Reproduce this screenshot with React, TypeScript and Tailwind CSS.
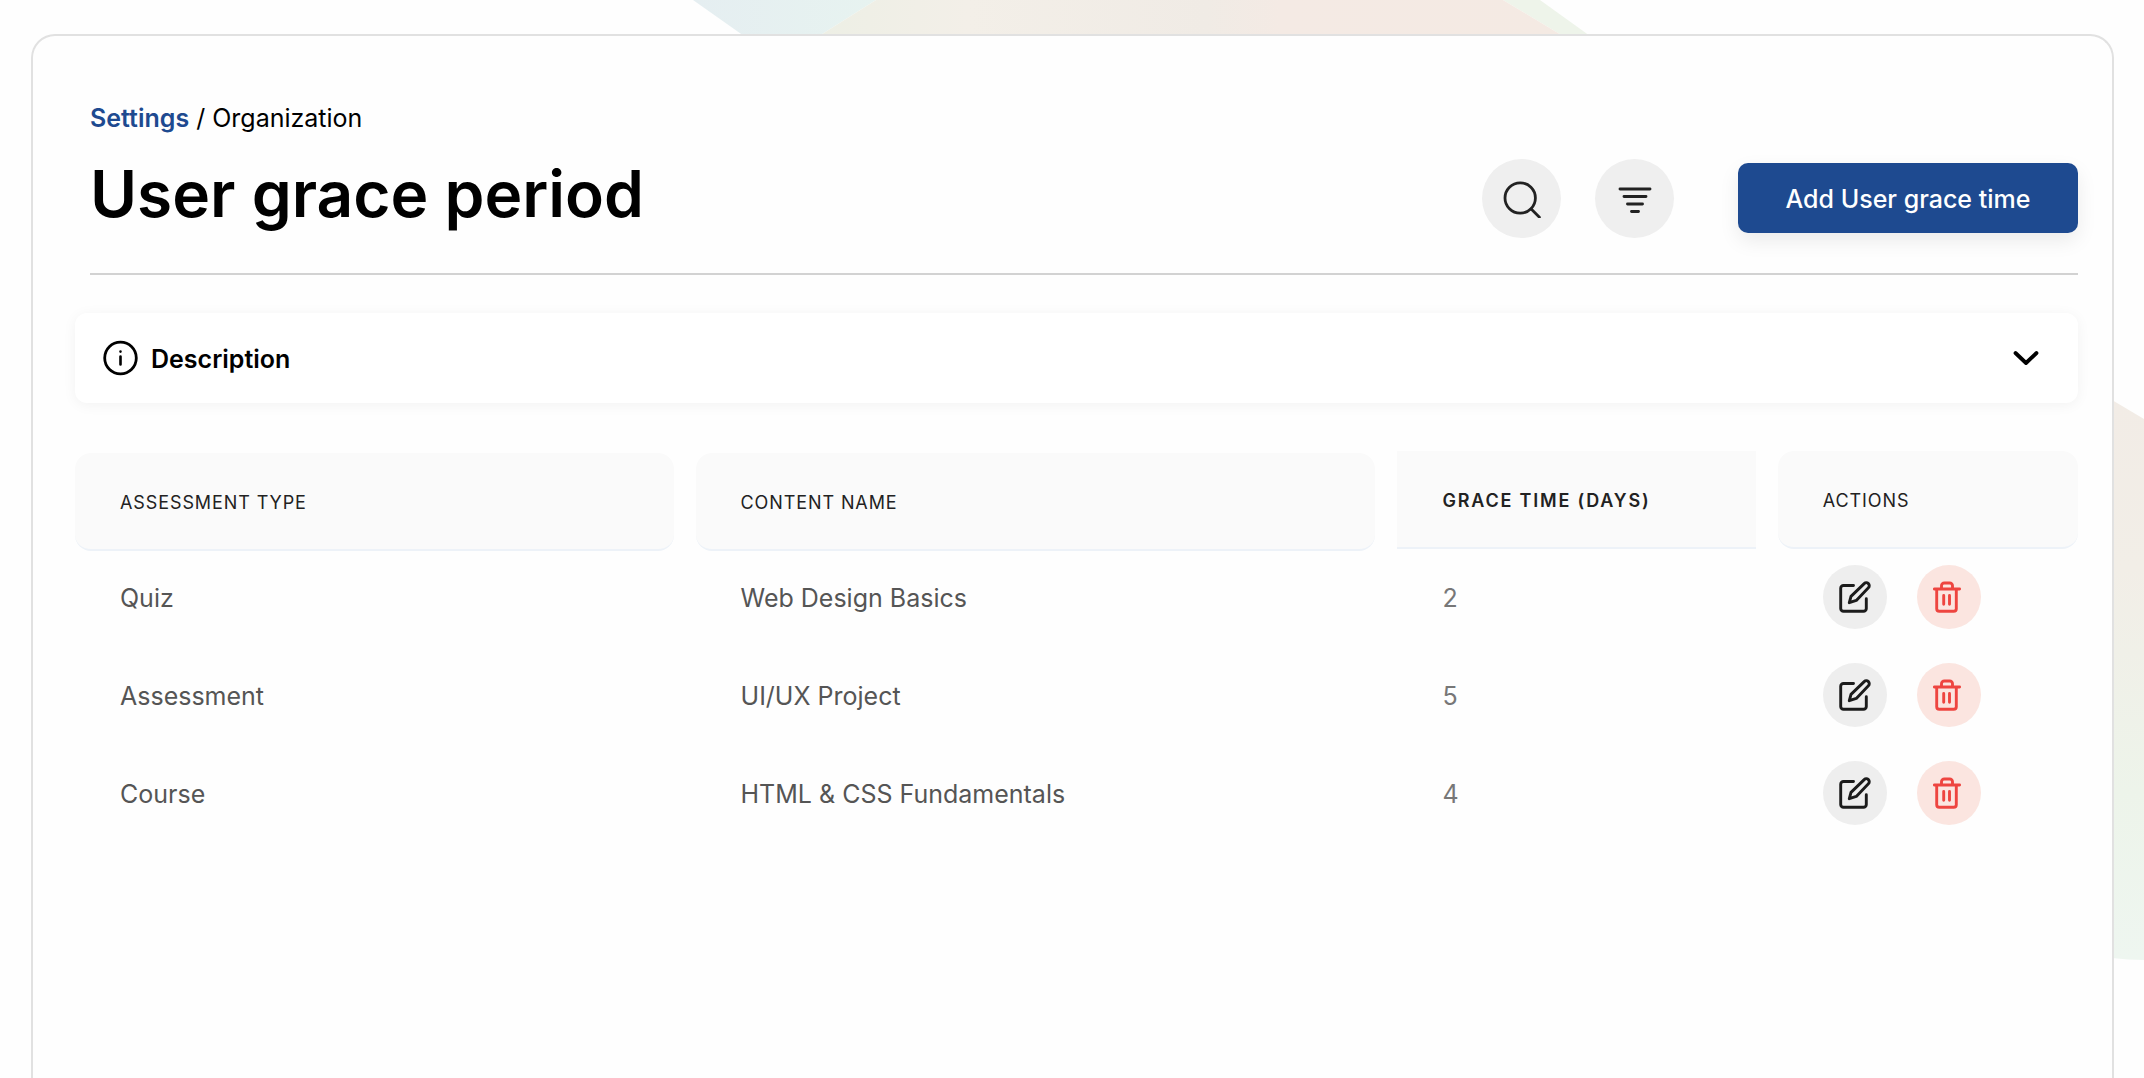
import { useState } from "react";

type GraceTime = {
  id: number;
  type: string;
  content: string;
  days: number;
};

const graceTimes: GraceTime[] = [
  { id: 1, type: "Quiz", content: "Web Design Basics", days: 2 },
  { id: 2, type: "Assessment", content: "UI/UX Project", days: 5 },
  { id: 3, type: "Course", content: "HTML & CSS Fundamentals", days: 4 },
];

function SearchIcon() {
  return (
    <svg className="h-10 w-10" viewBox="0 0 40 40" fill="none" stroke="currentColor" strokeWidth={2.8} strokeLinecap="round">
      <circle cx="18.2" cy="20" r="15.2" />
      <path d="M29.2 31l8.2 8.2" />
    </svg>
  );
}

function FilterIcon() {
  return (
    <svg className="h-10 w-10" viewBox="0 0 40 40" fill="none" stroke="currentColor" strokeWidth={2.9} strokeLinecap="round">
      <path d="M5 11h30M9 18.5h22M12.5 26h15M16.5 33.5h7" />
    </svg>
  );
}

function InfoIcon() {
  return (
    <svg className="h-9 w-9" viewBox="0 0 36 36" fill="none" stroke="currentColor" strokeLinecap="round">
      <circle cx="17.5" cy="18" r="15.8" strokeWidth={2.8} />
      <path d="M17.5 16.5v8M17.5 11.5v.1" strokeWidth={2.6} />
    </svg>
  );
}

function ChevronIcon() {
  return (
    <svg className="h-7 w-7" viewBox="0 0 28 28" fill="none" stroke="currentColor" strokeWidth={3.8} strokeLinecap="round" strokeLinejoin="round">
      <path d="M3.5 9L14 19 24.5 9" />
    </svg>
  );
}

function EditIcon() {
  return (
    <svg className="h-8 w-8" viewBox="0 0 32 32" fill="none" stroke="currentColor" strokeWidth={2.9} strokeLinecap="round" strokeLinejoin="round">
      <path d="M14.5 4.5H4.5a2.8 2.8 0 00-2.8 2.8v20.2a2.8 2.8 0 002.8 2.8h20a2.8 2.8 0 002.8-2.8V17.7" />
      <path d="M25.2 2.6a2.9 2.9 0 014.2 4.2L17.3 19.4l-7 2.3 1.7-6.3z" />
    </svg>
  );
}

function TrashIcon() {
  return (
    <svg className="h-8 w-8" viewBox="0 0 32 32" fill="none" stroke="currentColor" strokeWidth={2.9} strokeLinecap="round" strokeLinejoin="round">
      <path d="M1.4 8h25.2M3.7 8v19.7a2.6 2.6 0 002.6 2.6h14.4a2.6 2.6 0 002.6-2.6V8M8.5 7.5V4.8a2.8 2.8 0 012.8-2.8h5.4a2.8 2.8 0 012.8 2.8v2.7M10.7 14.5v8.8M16.5 14.5v8.8" />
    </svg>
  );
}

// Decorative shapes behind the card
function Backdrop() {
  return (
    <div className="absolute inset-0 -z-10 overflow-hidden" aria-hidden="true">
      <svg className="absolute top-0 left-[32.3%] h-9 w-[896px]" viewBox="0 0 896 36" preserveAspectRatio="none">
        <defs>
          <linearGradient id="band" x1="0" x2="1">
            <stop offset="0" stopColor="#edefe5" />
            <stop offset=".2" stopColor="#f3efe8" />
            <stop offset=".52" stopColor="#f0ebe5" />
            <stop offset=".62" stopColor="#f4eae4" />
            <stop offset="1" stopColor="#f4eae3" />
          </linearGradient>
          <linearGradient id="edge" x1="0" x2="1">
            <stop offset="0" stopColor="#e5eef1" />
            <stop offset="1" stopColor="#e7f3f0" />
          </linearGradient>
        </defs>
        <path d="M0 0h183l-57 36H51z" fill="url(#edge)" />
        <path d="M810 0h37l50 36h-27z" fill="#eef4ea" />
        <path d="M183 0h627l60 36H126z" fill="url(#band)" />
      </svg>
      <svg className="absolute top-[400px] right-0 h-[560px] w-8" viewBox="0 0 32 560" preserveAspectRatio="none">
        <defs>
          <linearGradient id="side" x1="0" y1="0" x2="0" y2="1">
            <stop offset="0" stopColor="#f2ece6" />
            <stop offset=".3" stopColor="#f2eee7" />
            <stop offset=".45" stopColor="#f0f0e8" />
            <stop offset=".7" stopColor="#edf4ea" />
            <stop offset="1" stopColor="#eef6f0" />
          </linearGradient>
        </defs>
        <path d="M0 0l32 19v541q-16 0-32-2z" fill="url(#side)" />
      </svg>
    </div>
  );
}

export default function App() {
  const [open, setOpen] = useState(false);

  return (
    <div className="relative isolate flex min-h-screen flex-col bg-[#fefefe] pt-[34px] pr-[30px] pl-[31px] font-['Inter',sans-serif] text-black">
      <Backdrop />
      <main className="flex-1 rounded-t-3xl border-2 border-b-0 border-[#e1e1e1] bg-[#fefefe] pt-16 pr-[34px] pl-[42px]">
        {/* Header */}
        <header className="ml-[15px] border-b-2 border-[#d2d2d2] pb-[33px]">
          <nav aria-label="Breadcrumb" className="text-[25px] leading-9">
            <a href="#settings" className="font-semibold text-[#1e4a90]">Settings</a> / Organization
          </nav>
          <div className="mt-3 flex items-center justify-between">
            <h1 className="text-[64px] leading-[92px] font-semibold">User grace period</h1>
            <div className="mt-2 flex items-center">
              <button type="button" aria-label="Search" className="flex size-[79px] items-center justify-center rounded-full bg-[#efefef] text-[#222]">
                <SearchIcon />
              </button>
              <button type="button" aria-label="Filter" className="ml-[34px] flex size-[79px] items-center justify-center rounded-full bg-[#efefef] text-[#222]">
                <FilterIcon />
              </button>
              <button type="button" className="ml-16 h-[70px] w-[340px] rounded-[10px] bg-[#1e4a90] pt-1 text-[25px] font-medium text-white shadow-[0_8px_20px_rgba(0,0,0,0.08)]">
                Add User grace time
              </button>
            </div>
          </div>
        </header>

        {/* Description */}
        <section className="mt-[38px] rounded-xl bg-white shadow-[0_2px_14px_rgba(0,0,0,0.05)]">
          <button
            type="button"
            aria-expanded={open}
            onClick={() => setOpen(!open)}
            className="flex h-[90px] w-full items-center px-7"
          >
            <InfoIcon />
            <span className="ml-3 pt-1 text-[25px] font-semibold">Description</span>
            <span className="mr-[10px] ml-auto">
              <ChevronIcon />
            </span>
          </button>
          {open && <p className="px-7 pb-6 text-[25px] text-[#555]">Description</p>}
        </section>

        {/* Grace times */}
        <div className="-mx-[22px] mt-12">
          <table className="w-full table-fixed border-separate border-spacing-x-[22px] border-spacing-y-0 text-left text-[25px] text-[#555]">
            <colgroup>
              <col className="w-[30.9%]" />
              <col className="w-[35.1%]" />
              <col className="w-[18.5%]" />
              <col className="w-[15.5%]" />
            </colgroup>
            <thead className="text-[18px] tracking-wider text-[#222]">
              <tr>
                <th className="p-0 pt-[2px] font-normal">
                  <div className="flex h-[98px] items-center rounded-2xl border-b-2 border-[#edf2f8] bg-[#fafafa] px-[45px] pt-[2px]">ASSESSMENT TYPE</div>
                </th>
                <th className="p-0 pt-[2px] font-normal">
                  <div className="flex h-[98px] items-center rounded-2xl border-b-2 border-[#edf2f8] bg-[#fafafa] px-[45px] pt-[2px]">CONTENT NAME</div>
                </th>
                <th className="p-0 pb-[2px] font-semibold tracking-widest">
                  <div className="flex h-[98px] items-center border-b-2 border-[#edf2f8] bg-[#fafafa] px-[45px] pt-[2px]">GRACE TIME (DAYS)</div>
                </th>
                <th className="p-0 pb-[2px] font-normal">
                  <div className="flex h-[98px] items-center rounded-2xl border-b-2 border-[#edf2f8] bg-[#fafafa] px-[45px] pt-[2px]">ACTIONS</div>
                </th>
              </tr>
            </thead>
            <tbody>
              {graceTimes.map((row) => (
                <tr key={row.id}>
                  <td className="px-[45px] pt-4 pb-[18px]">{row.type}</td>
                  <td className="px-[45px] pt-4 pb-[18px]">{row.content}</td>
                  <td className="px-[45px] pt-4 pb-[18px] text-[#777]">{row.days}</td>
                  <td className="px-[45px] pt-[14px] pb-5">
                    <div className="flex gap-[30px]">
                      <button type="button" aria-label={`Edit ${row.type}`} className="flex size-16 items-center justify-center rounded-full bg-[#eee] text-[#1c1c1c]">
                        <EditIcon />
                      </button>
                      <button type="button" aria-label={`Delete ${row.type}`} className="flex size-16 items-center justify-center rounded-full bg-[#fbe5e0] text-[#ee4540]">
                        <TrashIcon />
                      </button>
                    </div>
                  </td>
                </tr>
              ))}
            </tbody>
          </table>
        </div>
      </main>
    </div>
  );
}
